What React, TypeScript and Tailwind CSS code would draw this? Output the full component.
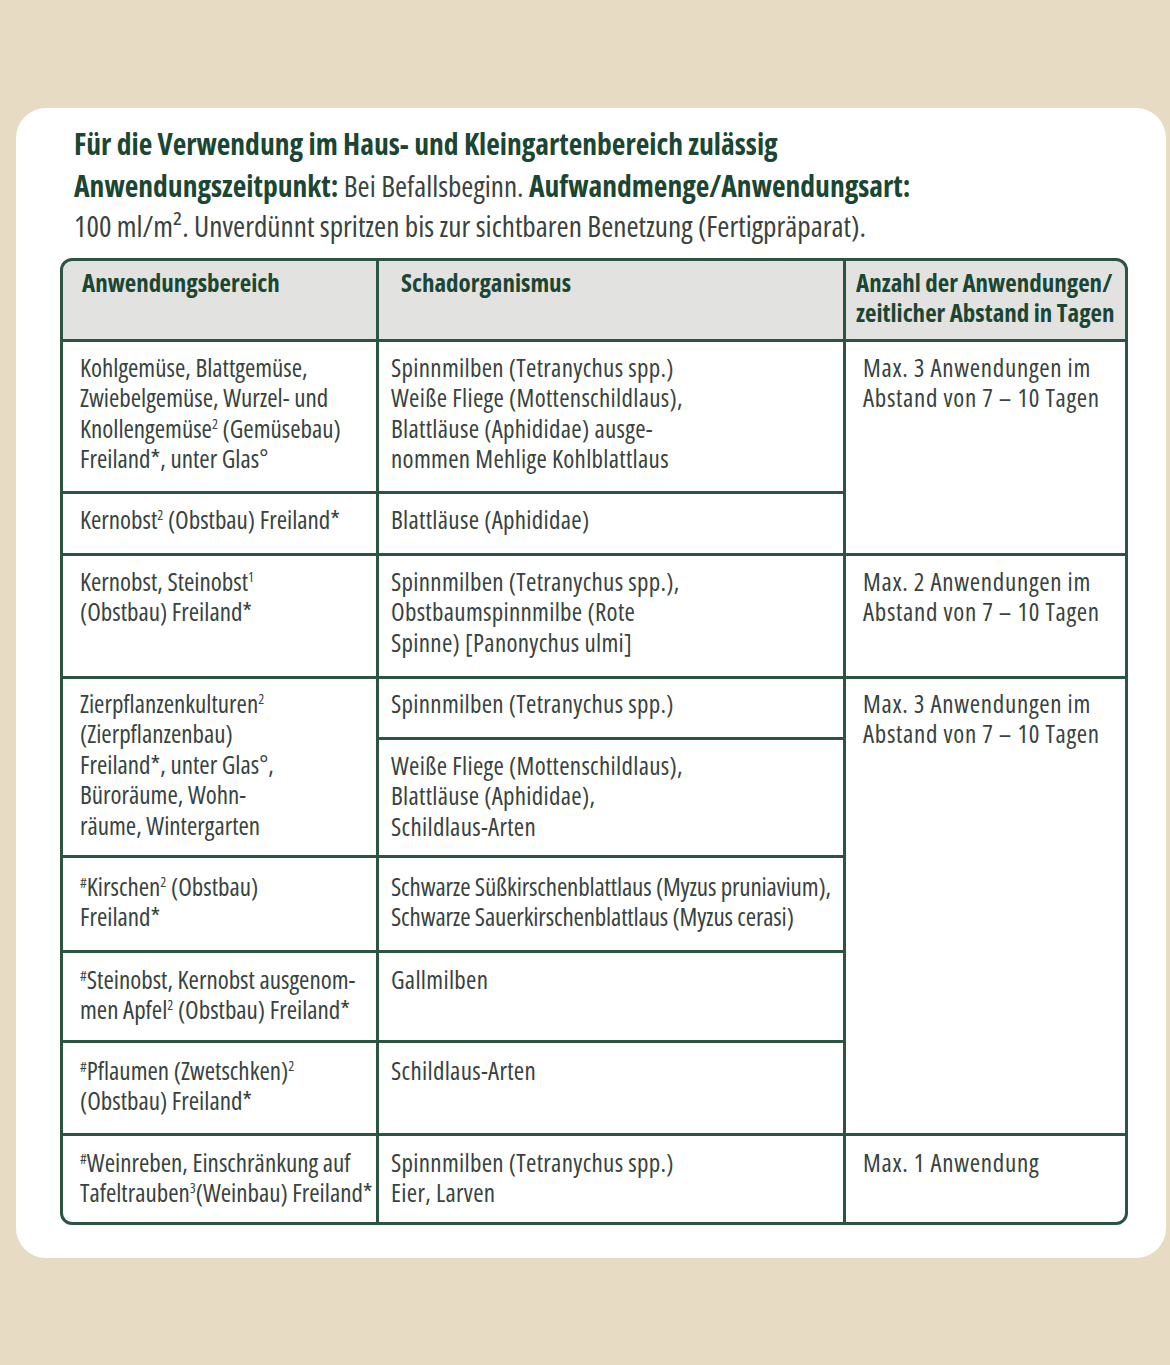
import React from "react";

const Sup = ({ children }: { children: React.ReactNode }) => (
  <sup className="relative top-[-9px] align-baseline text-[14px] leading-none">{children}</sup>
);

const Hash = () => <sup className="relative top-[-8px] align-baseline text-[15px] leading-none">#</sup>;

const cell = "bg-white text-[25px] leading-[30.6px] text-[#38433e]";

export default function App() {
  return (
    <div className="min-h-[1365px] w-[1170px] bg-[#e8dbc3] pt-[108px] font-['Open_Sans',sans-serif] [font-stretch:condensed]">
      <div className="ml-[16px] h-[1150px] w-[1150px] rounded-[30px] bg-white pt-[15px]">
        <div className="pl-[58px] text-[29.6px] leading-[41.5px]">
          <div className="font-bold text-[#1b4632]">Für die Verwendung im Haus- und Kleingartenbereich zulässig</div>
          <div className="h-[41.5px]">
            <span className="font-bold text-[#1b4632]">Anwendungszeitpunkt:</span>
            <span className="text-[29.2px] text-[#3a423e]"> Bei Befallsbeginn. </span>
            <span className="font-bold text-[#1b4632]">Aufwandmenge/Anwendungsart:</span>
          </div>
          <div className="h-[41.5px] text-[29.3px] text-[#3a423e]">100 ml/m². Unverdünnt spritzen bis zur sichtbaren Benetzung (Fertigpräparat).</div>
        </div>

        <div className="ml-[44px] mt-[10px] grid w-[1068px] grid-cols-[313px_464px_1fr] grid-rows-[78px_149px_59px_120px_58px_115px_92px_87px_90px_86px] gap-[3px] overflow-hidden rounded-[12px] border-[3px] border-[#2b5443] bg-[#2b5443]">
          {/* Header */}
          <div className="col-start-1 row-start-1 bg-[#e2e3e1] pl-[19px] pt-[6px] text-[25px] font-bold leading-[30px] text-[#1b4632]">
            Anwendungsbereich
          </div>
          <div className="col-start-2 row-start-1 bg-[#e2e3e1] pl-[22px] pt-[6px] text-[25px] font-bold leading-[30px] text-[#1b4632]">
            Schadorganismus
          </div>
          <div className="col-start-3 row-start-1 bg-[#e2e3e1] pl-[10px] pt-[6px] text-[25px] font-bold leading-[30px] text-[#1b4632]">
            Anzahl der Anwendungen/
            <br />
            zeitlicher Abstand in Tagen
          </div>

          {/* Row 1 */}
          <div className={`${cell} col-start-1 row-start-2 pl-[17px] pt-[10px]`}>
            Kohlgemüse, Blattgemüse,
            <br />
            Zwiebelgemüse, Wurzel- und
            <br />
            Knollengemüse<Sup>2</Sup> (Gemüsebau)
            <br />
            Freiland*, unter Glas°
          </div>
          <div className={`${cell} col-start-2 row-start-2 pl-[12px] pt-[10px] tracking-[0.3px]`}>
            Spinnmilben (Tetranychus spp.)
            <br />
            Weiße Fliege (Mottenschildlaus),
            <br />
            Blattläuse (Aphididae) ausge-
            <br />
            nommen Mehlige Kohlblattlaus
          </div>
          <div className={`${cell} col-start-3 row-start-2 row-span-2 pl-[17px] pt-[10px] tracking-[0.7px]`}>
            Max. 3 Anwendungen im
            <br />
            Abstand von 7 – 10 Tagen
          </div>

          {/* Row 2 */}
          <div className={`${cell} col-start-1 row-start-3 pl-[17px] pt-[10px]`}>
            Kernobst<Sup>2</Sup> (Obstbau) Freiland*
          </div>
          <div className={`${cell} col-start-2 row-start-3 pl-[12px] pt-[10px] tracking-[0.3px]`}>Blattläuse (Aphididae)</div>

          {/* Row 3 */}
          <div className={`${cell} col-start-1 row-start-4 pl-[17px] pt-[10px]`}>
            Kernobst, Steinobst<Sup>1</Sup>
            <br />
            (Obstbau) Freiland*
          </div>
          <div className={`${cell} col-start-2 row-start-4 pl-[12px] pt-[10px] tracking-[0.3px]`}>
            Spinnmilben (Tetranychus spp.),
            <br />
            Obstbaumspinnmilbe (Rote
            <br />
            Spinne) [Panonychus ulmi]
          </div>
          <div className={`${cell} col-start-3 row-start-4 pl-[17px] pt-[10px] tracking-[0.7px]`}>
            Max. 2 Anwendungen im
            <br />
            Abstand von 7 – 10 Tagen
          </div>

          {/* Row 4 */}
          <div className={`${cell} col-start-1 row-start-5 row-span-2 pl-[17px] pt-[9px]`}>
            Zierpflanzenkulturen<Sup>2</Sup>
            <br />
            (Zierpflanzenbau)
            <br />
            Freiland*, unter Glas°,
            <br />
            Büroräume, Wohn-
            <br />
            räume, Wintergarten
          </div>
          <div className={`${cell} col-start-2 row-start-5 pl-[12px] pt-[9px] tracking-[0.3px]`}>Spinnmilben (Tetranychus spp.)</div>
          <div className={`${cell} col-start-2 row-start-6 pl-[12px] pt-[10px] tracking-[0.3px]`}>
            Weiße Fliege (Mottenschildlaus),
            <br />
            Blattläuse (Aphididae),
            <br />
            Schildlaus-Arten
          </div>
          <div className={`${cell} col-start-3 row-start-5 row-span-5 pl-[17px] pt-[9px] tracking-[0.7px]`}>
            Max. 3 Anwendungen im
            <br />
            Abstand von 7 – 10 Tagen
          </div>

          {/* Row 5 */}
          <div className={`${cell} col-start-1 row-start-7 pl-[17px] pt-[13px]`}>
            <Hash />
            Kirschen<Sup>2</Sup> (Obstbau)
            <br />
            Freiland*
          </div>
          <div className={`${cell} col-start-2 row-start-7 whitespace-nowrap pl-[12px] pt-[13px] tracking-[-0.15px]`}>
            Schwarze Süßkirschenblattlaus (Myzus pruniavium),
            <br />
            Schwarze Sauerkirschenblattlaus (Myzus cerasi)
          </div>

          {/* Row 6 */}
          <div className={`${cell} col-start-1 row-start-8 pl-[17px] pt-[11px]`}>
            <Hash />
            Steinobst, Kernobst ausgenom-
            <br />
            men Apfel<Sup>2</Sup> (Obstbau) Freiland*
          </div>
          <div className={`${cell} col-start-2 row-start-8 pl-[12px] pt-[11px] tracking-[0.3px]`}>Gallmilben</div>

          {/* Row 7 */}
          <div className={`${cell} col-start-1 row-start-9 pl-[17px] pt-[12px]`}>
            <Hash />
            Pflaumen (Zwetschken)<Sup>2</Sup>
            <br />
            (Obstbau) Freiland*
          </div>
          <div className={`${cell} col-start-2 row-start-9 pl-[12px] pt-[12px] tracking-[0.3px]`}>Schildlaus-Arten</div>

          {/* Row 8 */}
          <div className={`${cell} col-start-1 row-start-10 whitespace-nowrap pl-[17px] pt-[11px]`}>
            <Hash />
            Weinreben, Einschränkung auf
            <br />
            Tafeltrauben<Sup>3</Sup>(Weinbau) Freiland*
          </div>
          <div className={`${cell} col-start-2 row-start-10 pl-[12px] pt-[11px] tracking-[0.3px]`}>
            Spinnmilben (Tetranychus spp.)
            <br />
            Eier, Larven
          </div>
          <div className={`${cell} col-start-3 row-start-10 pl-[17px] pt-[11px] tracking-[0.7px]`}>Max. 1 Anwendung</div>
        </div>
      </div>
    </div>
  );
}
